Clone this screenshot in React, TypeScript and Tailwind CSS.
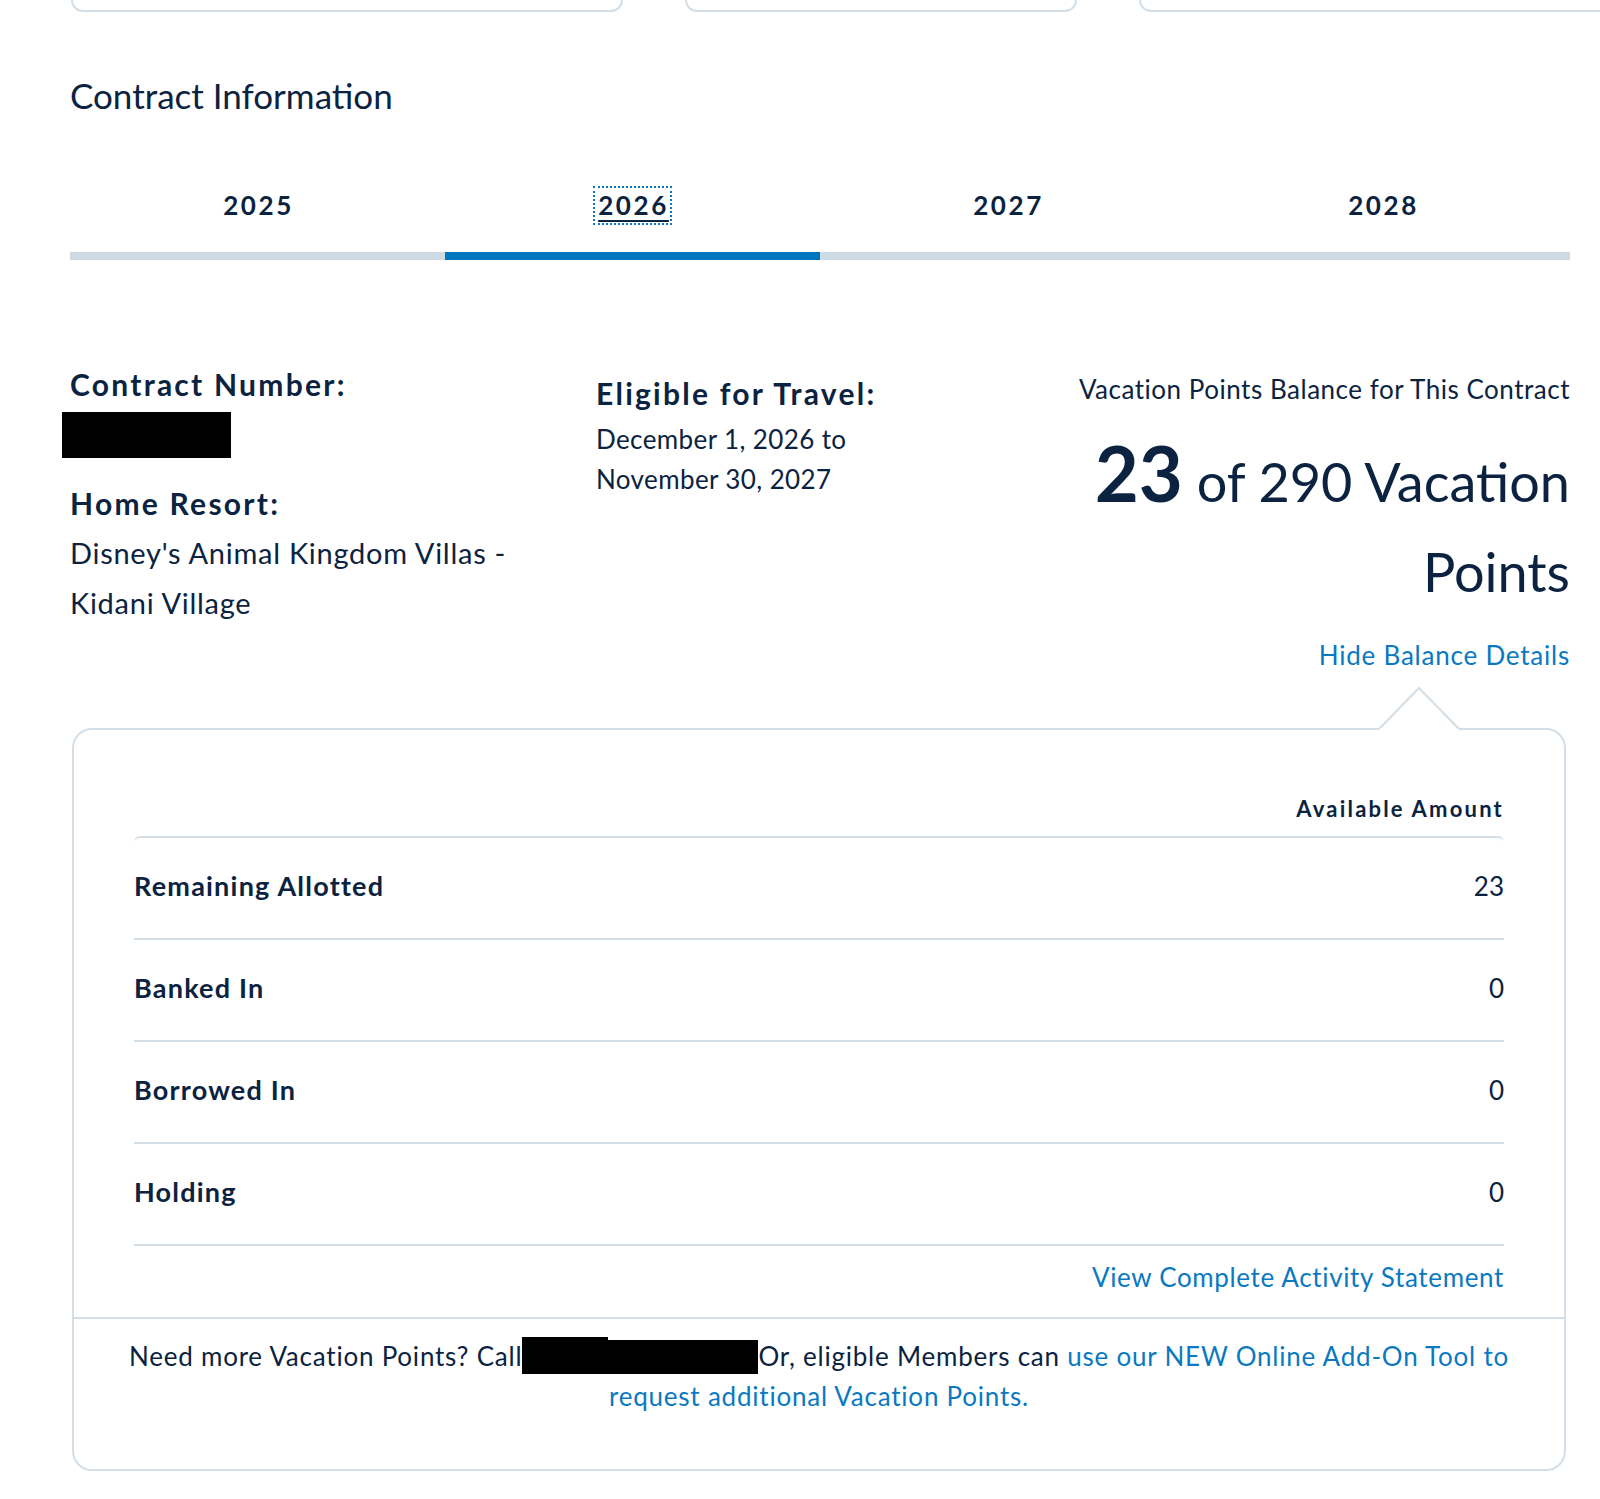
import React from "react";

const rows = [
  { label: "Remaining Allotted", value: "23" },
  { label: "Banked In", value: "0" },
  { label: "Borrowed In", value: "0" },
  { label: "Holding", value: "0" },
];

const years = ["2025", "2026", "2027", "2028"];

export default function App() {
  return (
    <div
      className="w-[1600px] h-[1499px] bg-white text-[#0b2340] overflow-hidden"
      style={{ fontFamily: "Lato, 'Open Sans', sans-serif" }}
    >
      {/* top card remnants */}
      <div className="flex h-[12px] pl-[71px] gap-[62px]">
        <div className="w-[552px] h-[12px] border-x-2 border-b-2 border-[#d3dee7] rounded-b-[12px]" />
        <div className="w-[392px] h-[12px] border-x-2 border-b-2 border-[#d3dee7] rounded-b-[12px]" />
        <div className="flex-1 h-[12px] border-l-2 border-b-2 border-[#d3dee7] rounded-bl-[12px]" />
      </div>

      <div className="ml-[70px] w-[1500px]">
        <h2 className="mt-[63px] text-[35px] leading-[40px] font-normal">Contract Information</h2>

        {/* tabs */}
        <div className="mt-[71px] grid grid-cols-4">
          {years.map((y) => {
            const active = y === "2026";
            return (
              <div key={y} className="flex flex-col items-center">
                <span
                  className={
                    active
                      ? "inline-block pl-[3px] pr-[1px] text-[26px] leading-[35px] font-bold tracking-[0.1em] underline decoration-2 underline-offset-[5px] border-2 border-dotted border-[#0a79bf]"
                      : "inline-block pl-[3px] pr-[1px] text-[26px] leading-[35px] font-bold tracking-[0.1em] border-2 border-transparent"
                  }
                >
                  {y}
                </span>
                <div className={active ? "mt-[27px] h-[8px] w-full bg-[#0077be]" : "mt-[27px] h-[8px] w-full bg-[#cfdbe4]"} />
              </div>
            );
          })}
        </div>

        {/* info */}
        <div className="flex">
          <div className="w-[526px] pt-[106px]">
            <div className="text-[30px] leading-[36px] font-bold tracking-[0.075em]">Contract Number:</div>
            <div className="mt-[10px] -ml-[8px] w-[169px] h-[46px] bg-black" />
            <div className="mt-[27px] text-[30px] leading-[36px] font-bold tracking-[0.075em]">Home Resort:</div>
            <div className="mt-[7px] text-[29px] leading-[50px] tracking-[0.025em]">
              Disney's Animal Kingdom Villas -<br />Kidani Village
            </div>
          </div>
          <div className="flex-1 pt-[115px]">
            <div className="text-[30px] leading-[36px] font-bold tracking-[0.075em]">Eligible for Travel:</div>
            <div className="mt-[8px] text-[26px] leading-[40px] tracking-[0.015em]">
              December 1, 2026 to<br />November 30, 2027
            </div>
          </div>
          <div className="w-[500px] pt-[111px] text-right">
            <div className="text-[26px] leading-[36px] tracking-[0.02em]">Vacation Points Balance for This Contract</div>
            <div className="mt-[28px] text-[54px] leading-[90px]">
              <span className="text-[76px] leading-none font-bold">23</span> of 290 Vacation Points
            </div>
            <div className="mt-[20px] text-[26px] leading-[36px] tracking-[0.03em] text-[#0a79bf]">Hide Balance Details</div>
          </div>
        </div>

        {/* panel */}
        <div className="relative mt-[55px] ml-[2px] w-[1494px] border-2 border-[#d3dee7] rounded-[20px]">
          <svg
            className="absolute -top-[44px] left-[1302px]"
            width="86"
            height="46"
            viewBox="0 0 86 46"
          >
            <polygon points="2,44 43,2 84,44" fill="white" />
            <polyline points="2,44 43,2 84,44" fill="none" stroke="#d3dee7" strokeWidth="2" />
            <rect x="3" y="43" width="80" height="3" fill="white" />
          </svg>

          <div className="px-[60px] pt-[64px]">
            <div className="text-right text-[22px] leading-[30px] font-bold tracking-[0.1em]">Available Amount</div>
            <div className="mt-[12px] border-t-2 border-[#d3dee7] rounded-t-[6px]">
              {rows.map((r) => (
                <div key={r.label} className="flex items-center justify-between h-[102px] pb-[4px] border-b-2 border-[#d3dee7]">
                  <span className="text-[27px] leading-[36px] font-bold tracking-[0.045em]">{r.label}</span>
                  <span className="text-[26px] leading-[36px]">{r.value}</span>
                </div>
              ))}
            </div>
            <div className="mt-[13px] pb-[22px] text-right text-[26px] leading-[36px] tracking-[0.025em] text-[#0a79bf]">
              View Complete Activity Statement
            </div>
          </div>

          <div className="border-t-2 border-[#d3dee7] pt-[17px] pb-[53px] text-center text-[26px] leading-[40px] tracking-[0.03em]">
            Need more Vacation Points? Call
            <span className="relative inline-block align-middle w-[236px] h-[34px] bg-black -mt-[4px]">
              <span className="absolute left-0 -top-[3px] w-[86px] h-[4px] bg-black" />
            </span>
            Or, eligible Members can{" "}
            <span className="text-[#0a79bf]">
              use our NEW Online Add-On Tool to
              <br />
              request additional Vacation Points.
            </span>
          </div>
        </div>
      </div>
    </div>
  );
}
